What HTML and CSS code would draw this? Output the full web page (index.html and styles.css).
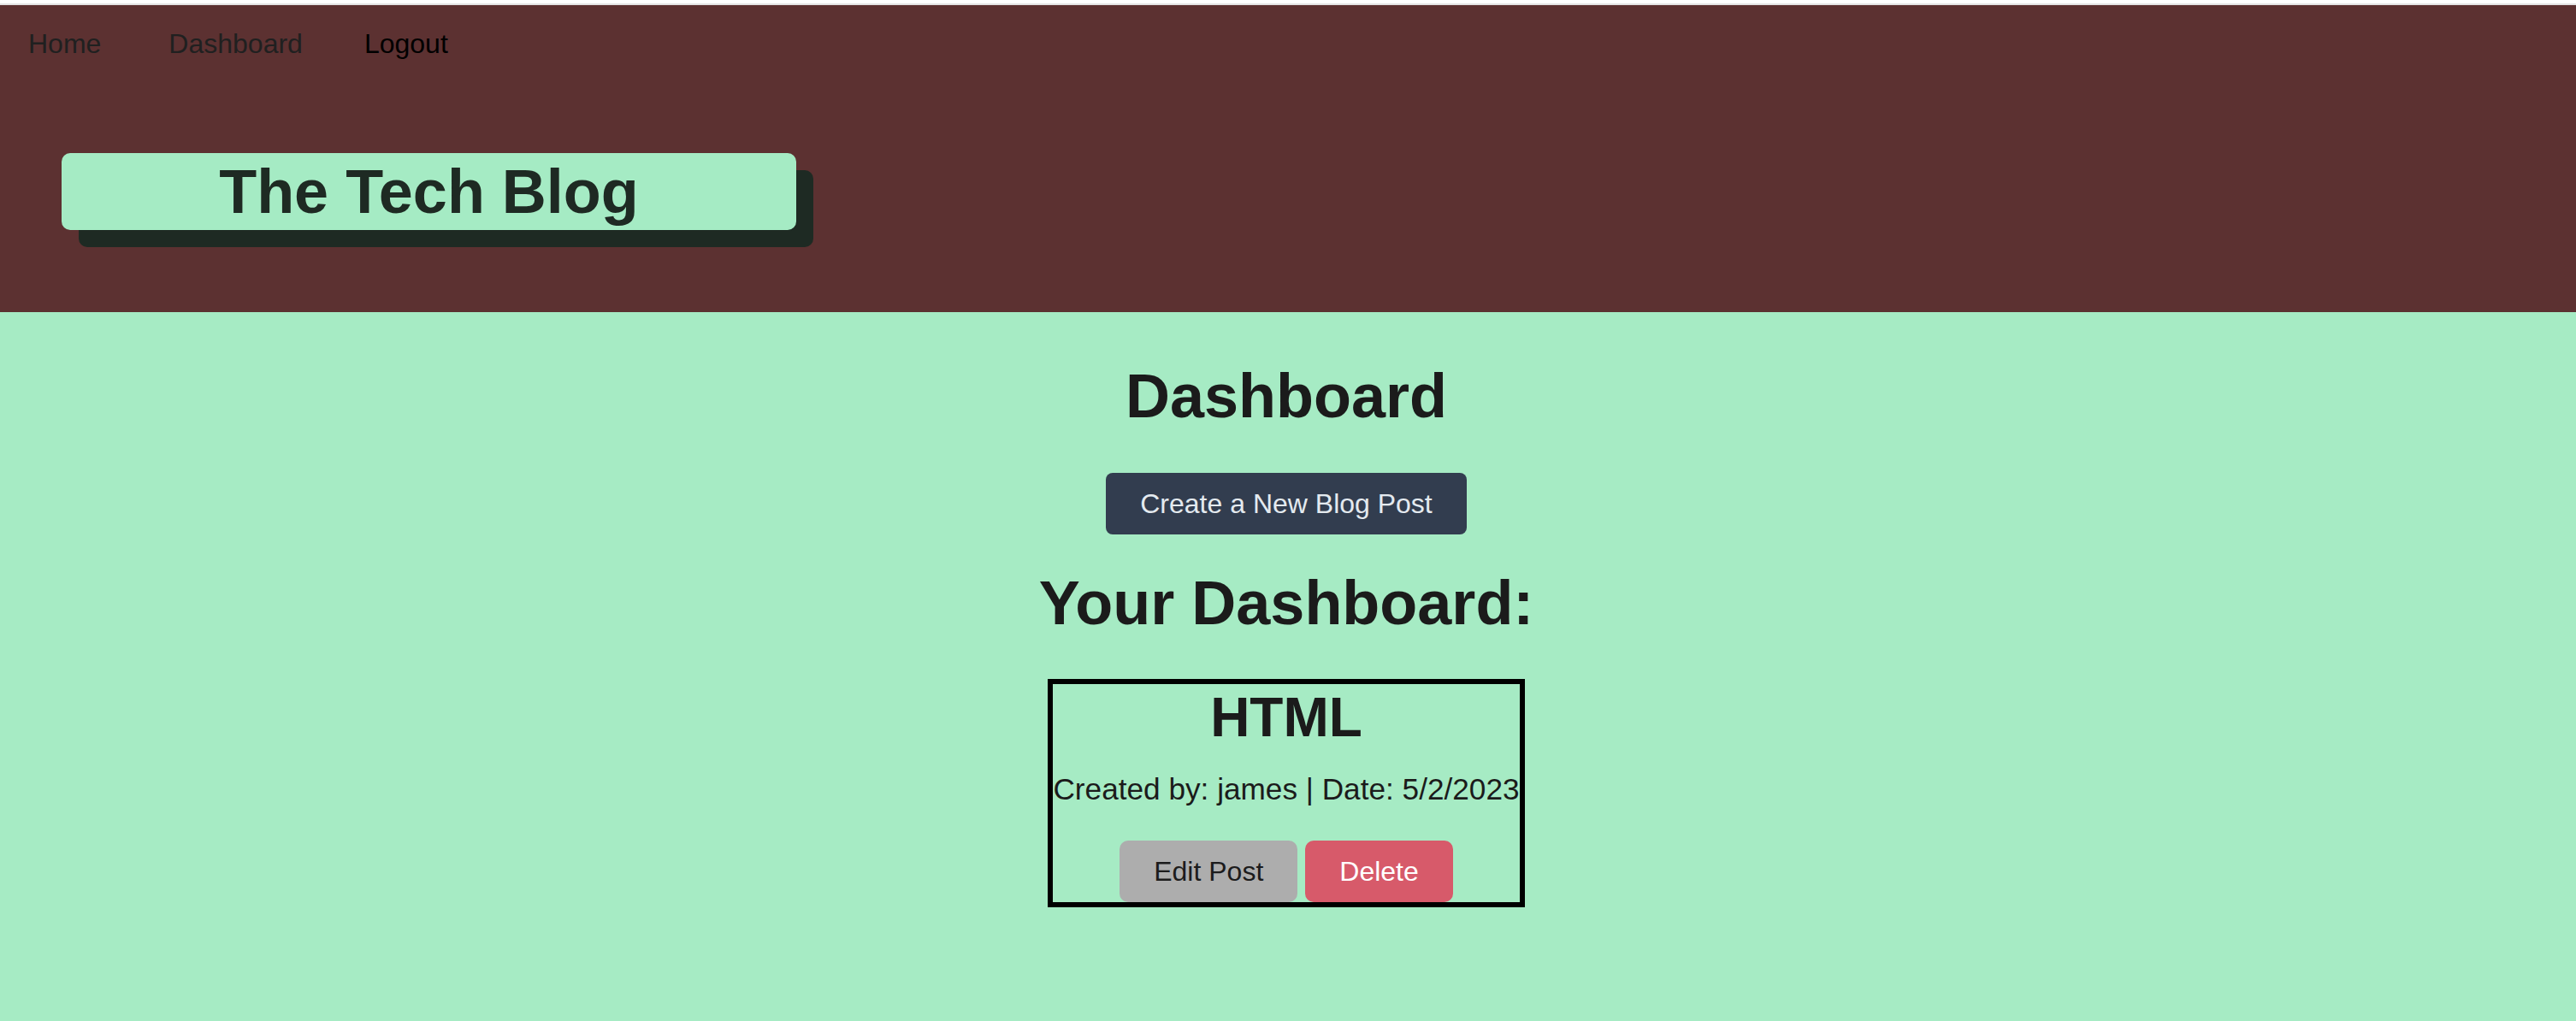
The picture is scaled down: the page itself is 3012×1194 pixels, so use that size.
FILE: index.html
```html
<!DOCTYPE html>
<html lang="en">
<head>
<meta charset="utf-8">
<title>The Tech Blog - Dashboard</title>
<link rel="stylesheet" href="styles.css">
</head>
<body>
<div class="topline"></div>
<header class="site-header">
  <nav class="nav">
    <a class="nav-link nav-home" href="#">Home</a>
    <a class="nav-link nav-dash" href="#">Dashboard</a>
    <a class="nav-link nav-logout" href="#">Logout</a>
  </nav>
  <div class="brand">
    <h1 class="brand-title">The Tech Blog</h1>
  </div>
</header>
<main class="main">
  <h1 class="page-title">Dashboard</h1>
  <button class="btn btn-create" type="button">Create a New Blog Post</button>
  <h2 class="section-title">Your Dashboard:</h2>
  <article class="post-card">
    <h2 class="post-title">HTML</h2>
    <p class="post-meta">Created by: james | Date: 5/2/2023</p>
    <div class="post-actions">
      <button class="btn btn-edit" type="button">Edit Post</button>
      <button class="btn btn-delete" type="button">Delete</button>
    </div>
  </article>
</main>
</body>
</html>
```
FILE: styles.css
```css
html {
  background: #a6ebc4;
}

body {
  margin: 0;
  min-height: 1194px;
  background: #a6ebc4;
  font-family: "Liberation Sans", Arial, sans-serif;
  color: #1b1b1b;
}

.topline {
  height: 4px;
  background: #ffffff;
  border-bottom: 2px solid #e4e4e4;
}

.site-header {
  background: #5c3131;
  padding: 27px 0 96px 0;
}

.nav {
  display: flex;
  align-items: center;
  padding-left: 33px;
  height: 37px;
}

.nav-link {
  font-size: 32px;
  line-height: 37px;
  text-decoration: none;
  color: #202020;
}

.nav-dash {
  margin-left: 79px;
}

.nav-logout {
  margin-left: 72px;
  color: #000000;
}

.brand {
  margin: 109px 0 0 72px;
  width: 859px;
}

.brand-title {
  margin: 0;
  padding: 4px 0;
  font-size: 72px;
  line-height: 82px;
  font-weight: 700;
  text-align: center;
  color: #1e2a23;
  background: #a5ebc4;
  border-radius: 10px;
  box-shadow: 20px 20px 0 0 #1e2a23;
}

.main {
  display: flex;
  flex-direction: column;
  align-items: center;
  padding: 57px 4px 0 0;
}

.page-title {
  margin: 0;
  font-size: 72px;
  line-height: 83px;
  font-weight: 700;
}

.btn {
  font-family: "Liberation Sans", Arial, sans-serif;
  font-size: 32px;
  line-height: 40px;
  padding: 16px 40px;
  border: none;
  cursor: pointer;
}

.btn-create {
  margin-top: 48px;
  background: #323d4f;
  color: #e4eaef;
  border-radius: 8px;
}

.section-title {
  margin: 39px 0 0 0;
  font-size: 72px;
  line-height: 83px;
  font-weight: 700;
}

.post-card {
  margin-top: 47px;
  border: 6px solid #000000;
  padding-top: 2px;
  display: flex;
  flex-direction: column;
  align-items: center;
}

.post-title {
  margin: 0;
  font-size: 64px;
  line-height: 74px;
  font-weight: 700;
}

.post-meta {
  margin: 27px 0 0 0;
  font-size: 35.2px;
  line-height: 40px;
  white-space: nowrap;
}

.post-actions {
  margin-top: 40px;
  display: flex;
  gap: 9px;
}

.btn-edit {
  background: #adadad;
  color: #1c1c1c;
  border-radius: 10px;
}

.btn-delete {
  background: #d75a6a;
  color: #ffffff;
  border-radius: 10px;
}
```
